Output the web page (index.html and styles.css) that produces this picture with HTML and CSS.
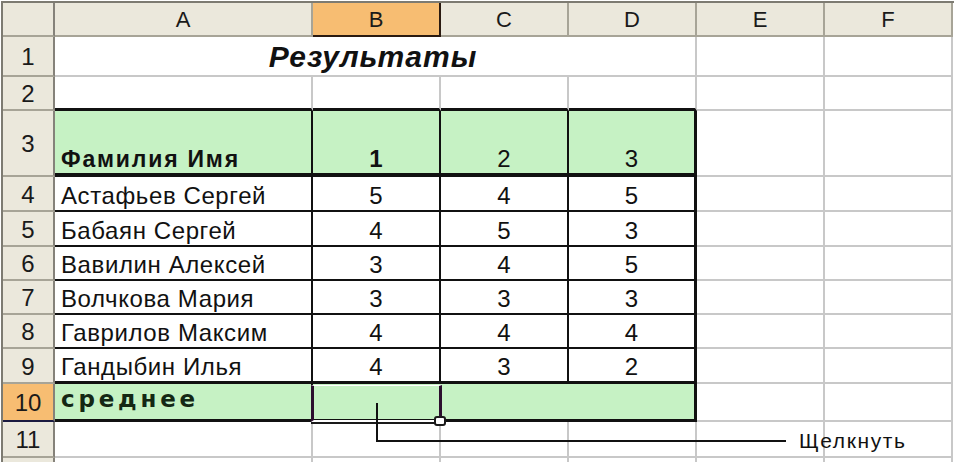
FILE: index.html
```html
<!DOCTYPE html>
<html lang="ru">
<head>
<meta charset="utf-8">
<title>Результаты</title>
<link rel="stylesheet" href="styles.css">
</head>
<body>
<div class="page">
  <div class="sheet">
    <div class="hd corner"></div>
    <div class="hd col">A</div>
    <div class="hd col active-col">B</div>
    <div class="hd col">C</div>
    <div class="hd col">D</div>
    <div class="hd col">E</div>
    <div class="hd col">F</div>

    <div class="hd row">1</div>
    <div class="c title span4">Результаты</div>
    <div class="c"></div>
    <div class="c"></div>

    <div class="hd row">2</div>
    <div class="c top"></div>
    <div class="c top"></div>
    <div class="c top"></div>
    <div class="c top"></div>
    <div class="c"></div>
    <div class="c"></div>

    <div class="hd row">3</div>
    <div class="c t green head name">Фамилия Имя</div>
    <div class="c t green head num strong">1</div>
    <div class="c t green head num">2</div>
    <div class="c t green head num last">3</div>
    <div class="c"></div>
    <div class="c"></div>

    <div class="hd row">4</div>
    <div class="c t name">Астафьев Сергей</div>
    <div class="c t num">5</div>
    <div class="c t num">4</div>
    <div class="c t num last">5</div>
    <div class="c"></div>
    <div class="c"></div>

    <div class="hd row">5</div>
    <div class="c t name">Бабаян Сергей</div>
    <div class="c t num">4</div>
    <div class="c t num">5</div>
    <div class="c t num last">3</div>
    <div class="c"></div>
    <div class="c"></div>

    <div class="hd row">6</div>
    <div class="c t name">Вавилин Алексей</div>
    <div class="c t num">3</div>
    <div class="c t num">4</div>
    <div class="c t num last">5</div>
    <div class="c"></div>
    <div class="c"></div>

    <div class="hd row">7</div>
    <div class="c t name">Волчкова Мария</div>
    <div class="c t num">3</div>
    <div class="c t num">3</div>
    <div class="c t num last">3</div>
    <div class="c"></div>
    <div class="c"></div>

    <div class="hd row">8</div>
    <div class="c t name">Гаврилов Максим</div>
    <div class="c t num">4</div>
    <div class="c t num">4</div>
    <div class="c t num last">4</div>
    <div class="c"></div>
    <div class="c"></div>

    <div class="hd row">9</div>
    <div class="c t name pre">Гандыбин Илья</div>
    <div class="c t num pre">4</div>
    <div class="c t num pre">3</div>
    <div class="c t num last pre">2</div>
    <div class="c"></div>
    <div class="c"></div>

    <div class="hd row active-row">10</div>
    <div class="c t green foot avg">среднее</div>
    <div class="c t green foot sel"></div>
    <div class="c t green foot last span2"></div>
    <div class="c"></div>
    <div class="c"></div>

    <div class="hd row">11</div>
    <div class="c"></div>
    <div class="c"></div>
    <div class="c"></div>
    <div class="c"></div>
    <div class="c"></div>
    <div class="c"></div>

    <div class="hd row"></div>
    <div class="c"></div>
    <div class="c"></div>
    <div class="c"></div>
    <div class="c"></div>
    <div class="c"></div>
    <div class="c"></div>
  </div>

  <div class="selection"><span class="handle"></span></div>
  <svg class="pointer" width="954" height="462" viewBox="0 0 954 462">
    <polyline points="377,403 377,441 786,441" fill="none" stroke="#111" stroke-width="2"/>
  </svg>
  <div class="callout">Щелкнуть</div>
</div>
</body>
</html>
```
FILE: styles.css
```css
html, body {
  margin: 0;
  padding: 0;
  background: #ffffff;
  overflow: hidden;
}

.page {
  position: relative;
  width: 954px;
  height: 462px;
  overflow: hidden;
  font-family: "Liberation Sans", Arial, sans-serif;
  color: #111;
}

.sheet {
  margin: 1px 0 0 1px;
  border-left: 2px solid #7d7b72;
  border-top: 2px solid #7d7b72;
  display: grid;
  grid-template-columns: 52px 258px 128px 128px 128px 128px 128px;
  grid-template-rows: 34px 40px 34px 66px 35px 35px 34px 34px 34px 35px 38px 36px 30px;
}

.hd {
  box-sizing: border-box;
  background: #ebe8dc;
  border-right: 2px solid #a7a497;
  border-bottom: 2px solid #a7a497;
  display: flex;
  align-items: center;
  justify-content: center;
  color: #1a1a1a;
}

.hd.col {
  font-size: 22px;
  padding-top: 1px;
}

.hd.row {
  font-size: 24px;
  border-right-color: #85827a;
  padding-top: 2px;
}

.hd.corner {
  border-right-color: #85827a;
}

.hd.active-col {
  background: #f7bd72;
  border-right-color: #2a1a10;
  border-bottom-color: #2a1a10;
}

.hd.active-row {
  background: #f7bd72;
  border-bottom-color: #1a1a40;
}

.c {
  box-sizing: border-box;
  border-right: 2px solid #c8c8c8;
  border-bottom: 2px solid #c8c8c8;
  display: flex;
  align-items: flex-end;
  font-size: 24px;
  line-height: 1;
  padding-bottom: 2px;
  white-space: nowrap;
}

.span4 {
  grid-column: span 4;
}

.span2 {
  grid-column: span 2;
}

.title {
  justify-content: center;
  font-weight: bold;
  font-style: italic;
  font-size: 30px;
  letter-spacing: 1px;
  padding-bottom: 3px;
  padding-right: 4px;
}

.c.top {
  border-bottom: 3px solid #111;
}

.c.t {
  border-right: 2px solid #111;
  border-bottom: 2px solid #111;
}

.c.t.last {
  border-right: 3px solid #111;
}

.c.t.pre {
  border-bottom: 3px solid #111;
}

.green {
  background: #c6f2c4;
}

.c.t.head {
  border-bottom: 4px solid #111;
  padding-bottom: 2px;
}

.name {
  padding-left: 6px;
  letter-spacing: 0.6px;
}

.head.name {
  font-weight: bold;
  font-size: 23px;
  letter-spacing: 1.8px;
}

.num {
  justify-content: center;
}

.num.strong {
  font-weight: bold;
}

.c.t.foot {
  border-bottom: 3px solid #111;
}

.avg {
  padding-left: 6px;
  font-family: "DejaVu Sans", sans-serif;
  font-weight: bold;
  font-size: 23px;
  letter-spacing: 3.8px;
  color: #142814;
  padding-bottom: 8px;
}

.c.t.sel {
  border-right-color: transparent;
}

.selection {
  position: absolute;
  left: 311px;
  top: 385px;
  width: 131px;
  height: 37px;
  box-sizing: border-box;
  border-left: 3px solid #2c0f2e;
  border-right: 3px solid #2c0f2e;
  border-top: 1px solid #ffffff;
  border-bottom: 2px solid #ffffff;
  box-shadow: 0 2px 0 #1a1a1a;
}

.handle {
  position: absolute;
  right: -7px;
  bottom: -6px;
  width: 8px;
  height: 6px;
  background: #ffffff;
  border: 2px solid #1a1a1a;
  border-radius: 3px;
}

.pointer {
  position: absolute;
  left: 0;
  top: 0;
}

.callout {
  position: absolute;
  left: 799px;
  top: 430px;
  font-size: 21px;
  letter-spacing: 1.6px;
  color: #111;
  line-height: 1;
}
```
